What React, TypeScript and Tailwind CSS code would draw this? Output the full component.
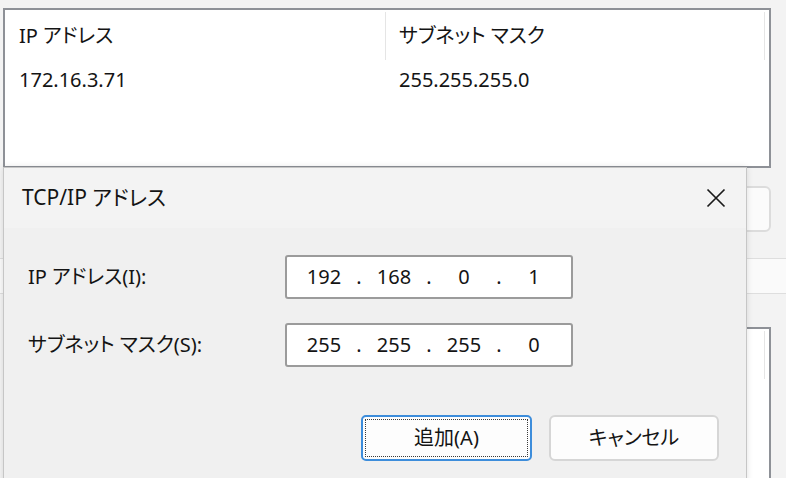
import React from "react";

const FONT = "font-['Noto_Sans','Noto_Sans_CJK_JP',sans-serif] [font-feature-settings:'palt']";

function IpBox({ parts }: { parts: string[] }) {
  return (
    <div className="w-[288px] h-[44px] border-2 border-[#9b9b9b] rounded-[3px] bg-white flex items-center px-[12px] text-[20px] text-[#141414]">
      {parts.map((p, i) => (
        <React.Fragment key={i}>
          {i > 0 && <span className="w-[20px] text-center">.</span>}
          <span className="w-[50px] text-center">{p}</span>
        </React.Fragment>
      ))}
    </div>
  );
}

export default function App() {
  return (
    <div className={`relative w-[786px] h-[478px] overflow-hidden bg-[#f3f3f3] text-[#141414] ${FONT}`}>
      {/* background window content */}
      <div className="flex flex-col pt-[8px]">
        <div className="ml-[3px] w-[768px] h-[160px] border-2 border-[#8e9197] bg-white">
          <div className="flex mt-[2px] h-[48px] items-center text-[20px]">
            <div className="w-[380px] pl-[14px]">IP アドレス</div>
            <div className="w-px h-full bg-[#e5e5e5]" />
            <div className="w-[378px] pl-[13px]">サブネット マスク</div>
            <div className="w-px h-full bg-[#e5e5e5]" />
          </div>
          <div className="flex h-[40px] items-center text-[20px]">
            <div className="w-[381px] pl-[14px]">172.16.3.71</div>
            <div className="pl-[13px]">255.255.255.0</div>
          </div>
        </div>
        <div className="mt-[18px] ml-auto mr-[15px] w-[120px] h-[46px] rounded-[6px] border-2 border-[#dcdcdc] bg-[#fbfbfb]" />
        <div className="mt-[26px] h-[36px] border-y border-[#dedede] bg-[#fafafa]" />
        <div className="mt-[33px] ml-[3px] w-[768px] h-[200px] border-2 border-[#8e9197] bg-white flex justify-end">
          <div className="mt-[2px] mr-[4px] w-px h-[48px] bg-[#e5e5e5]" />
        </div>
      </div>

      {/* dialog window */}
      <div className="absolute left-[3px] top-[167px] w-[744px] h-[330px] border border-[#c6c6c6] bg-[#f0f0f0] shadow-[0_0_6px_rgba(0,0,0,0.12)] flex flex-col">
        <div className="h-[60px] bg-[#f3f3f3] flex items-center">
          <div className="pl-[18px] text-[21px] flex-1">TCP/IP アドレス</div>
          <div className="w-[60px] h-full flex items-center justify-center">
            <svg width="20" height="20" viewBox="0 0 20 20" fill="none">
              <path d="M1.5 1.5 L18.5 18.5 M18.5 1.5 L1.5 18.5" stroke="#1a1a1a" strokeWidth="1.7" />
            </svg>
          </div>
        </div>
        <div className="flex flex-col pt-[27px] pl-[24px]">
          <div className="flex items-center">
            <div className="w-[257px] text-[20px]">IP アドレス(I):</div>
            <IpBox parts={["192", "168", "0", "1"]} />
          </div>
          <div className="flex items-center mt-[24px]">
            <div className="w-[257px] text-[20px]">サブネット マスク(S):</div>
            <IpBox parts={["255", "255", "255", "0"]} />
          </div>
          <div className="flex mt-[48px] pl-[333px] gap-[17px]">
            <div className="w-[171px] h-[46px] rounded-[5px] border-2 border-[#3d8ddb] bg-[#fdfdfd] p-[2px] flex">
              <div className="flex-1 border border-dotted border-[#3a3a3a] flex items-center justify-center text-[20px]">
                追加(A)
              </div>
            </div>
            <div className="w-[170px] h-[46px] rounded-[6px] border-2 border-[#d6d6d6] bg-[#fdfdfd] flex items-center justify-center text-[20px]">
              キャンセル
            </div>
          </div>
        </div>
      </div>
    </div>
  );
}
